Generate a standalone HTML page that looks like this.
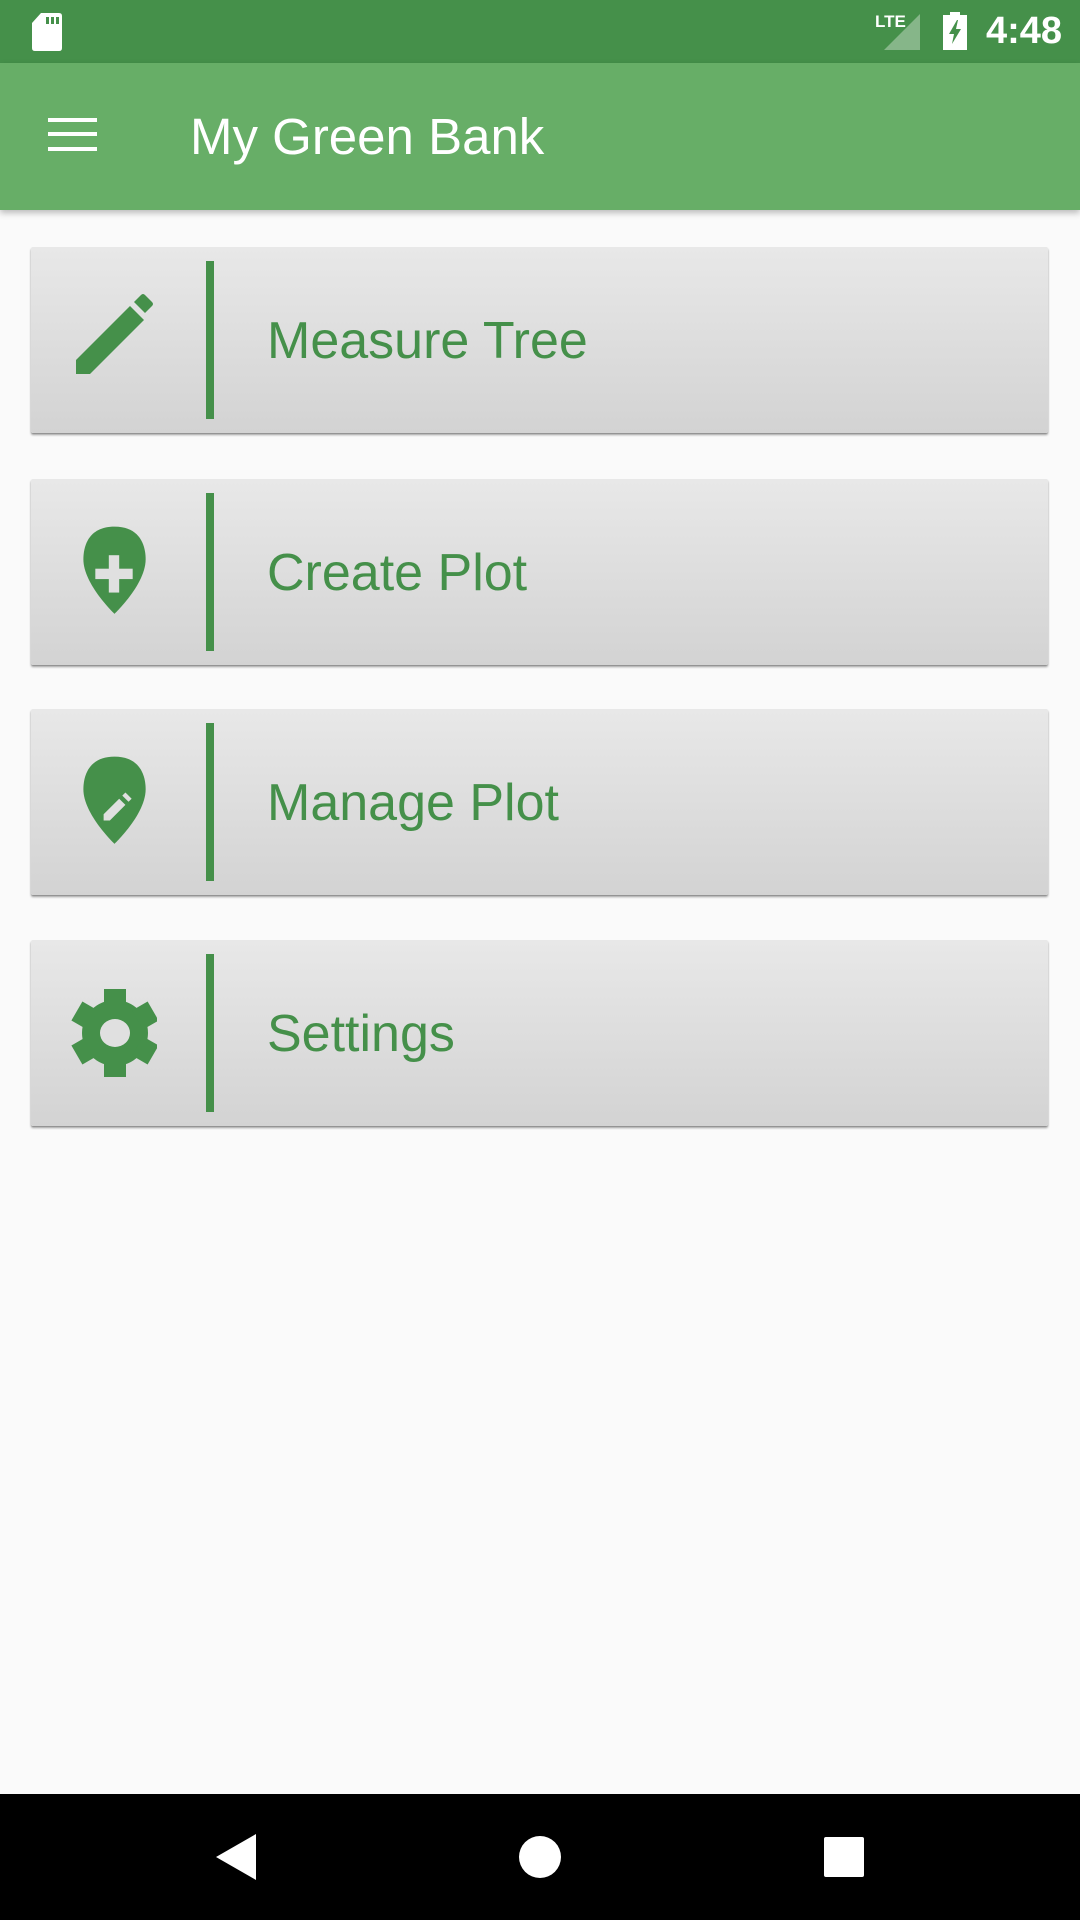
<!DOCTYPE html>
<html><head><meta charset="utf-8"><style>
*{margin:0;padding:0;box-sizing:border-box}
body{width:1080px;height:1920px;background:#fafafa;font-family:"Liberation Sans",sans-serif;position:relative;overflow:hidden}
.status{position:absolute;left:0;top:0;width:1080px;height:63px;background:#45904a}
.appbar{position:absolute;left:0;top:63px;width:1080px;height:147px;background:#67ae67;box-shadow:0 3px 6px rgba(0,0,0,.25)}
.title{position:absolute;left:190px;top:44px;color:#fff;font-size:51px;line-height:60px}
.ham{position:absolute;left:48px;width:49px;height:4px;background:#fff}
.card{position:absolute;left:31px;width:1017px;height:186px;background:linear-gradient(#e8e8e8,#d3d3d3);box-shadow:0 1px 1px rgba(0,0,0,.15),0 2px 2px rgba(0,0,0,.35);border-radius:2px}
.bar{position:absolute;left:175px;top:14px;width:8px;height:158px;background:#45904a}
.lbl{position:absolute;left:236px;top:64px;font-size:52px;line-height:60px;color:#45904a}
.ic{position:absolute;left:20px;top:40px;width:106px;height:106px}
.pin{left:28px;top:43px;width:110px;height:110px}
.nav{position:absolute;left:0;top:1794px;width:1080px;height:126px;background:#000}
</style></head><body>
<div class="status">
<svg style="position:absolute;left:31px;top:13px" width="32" height="38" viewBox="0 0 32 38"><path d="M10 0H28Q31 0 31 3V35Q31 38 28 38H4Q1 38 1 35V10Z" fill="#fff"/><rect x="15" y="4" width="3" height="7" fill="#45904a"/><rect x="20" y="4" width="3" height="7" fill="#45904a"/><rect x="25" y="4" width="3" height="7" fill="#45904a"/></svg>
<div style="position:absolute;left:875px;top:12px;color:#fff;font-size:17px;font-weight:bold">LTE</div>
<svg style="position:absolute;left:884px;top:14px" width="38" height="36"><path d="M36 0V36H0Z" fill="#fff" opacity=".35"/></svg>
<svg style="position:absolute;left:943px;top:12px" width="24" height="38" viewBox="0 0 24 38"><path d="M7 0H17V3H24V38H0V3H7Z" fill="#fff"/><path d="M14 8L6 22H11L9 32L18 17H13L15 8Z" fill="#45904a"/></svg>
<div style="position:absolute;left:986px;top:10px;color:#fff;font-size:38px;font-weight:bold">4:48</div>
</div>
<div class="appbar">
<div class="ham" style="top:55px"></div><div class="ham" style="top:69px"></div><div class="ham" style="top:84px"></div>
<div class="title">My Green Bank</div>
</div>

<div class="card" style="top:247px"><svg class="ic" viewBox="0 0 106 106"><path d="M25 87V73L79 19L93 33L39 87Z" fill="#45904a"/><path d="M83 15L90 8Q92 6 94 8L101 15Q103 17 101 19L94 26Z" fill="#45904a"/></svg><div class="bar"></div><div class="lbl">Measure Tree</div></div>

<div class="card" style="top:479px"><svg class="ic pin" viewBox="0 0 106 106"><path d="M53 15C36 15 33 28 33 36C33 52 53 71 53 71C53 71 73 52 73 36C73 28 70 15 53 15Z" transform="translate(-26 -18) scale(1.5)" fill="#45904a"/><rect x="35" y="45" width="36" height="10" fill="#e0e0e0"/><rect x="48" y="32" width="10" height="36" fill="#e0e0e0"/></svg><div class="bar"></div><div class="lbl">Create Plot</div></div>

<div class="card" style="top:709px"><svg class="ic pin" viewBox="0 0 106 106"><path d="M53 15C36 15 33 28 33 36C33 52 53 71 53 71C53 71 73 52 73 36C73 28 70 15 53 15Z" transform="translate(-26 -18) scale(1.5)" fill="#45904a"/><path d="M43 66V60L58 45L64 51L49 66Z M61 42L64 39L70 45L67 48Z" fill="#e0e0e0"/></svg><div class="bar"></div><div class="lbl">Manage Plot</div></div>

<div class="card" style="top:940px"><svg class="ic" viewBox="0 0 106 106"><g transform="translate(64 53)" fill="#45904a"><circle r="33"/><g id="t"><rect x="-11" y="-44" width="22" height="18"/></g><use href="#t" transform="rotate(60)"/><use href="#t" transform="rotate(120)"/><use href="#t" transform="rotate(180)"/><use href="#t" transform="rotate(240)"/><use href="#t" transform="rotate(300)"/><ellipse rx="15" ry="14" fill="#e0e0e0"/></g></svg><div class="bar"></div><div class="lbl">Settings</div></div>

<div class="nav">
<svg style="position:absolute;left:216px;top:40px" width="40" height="46"><path d="M40 0V46L0 23Z" fill="#fff"/></svg>
<div style="position:absolute;left:519px;top:42px;width:42px;height:42px;border-radius:50%;background:#fff"></div>
<div style="position:absolute;left:824px;top:43px;width:40px;height:40px;background:#fff;border-radius:2px"></div>
</div>
</body></html>
